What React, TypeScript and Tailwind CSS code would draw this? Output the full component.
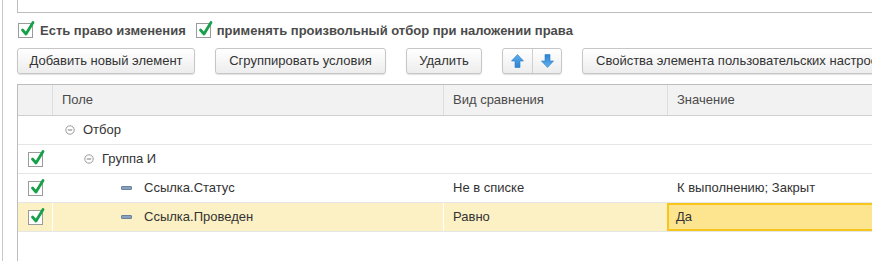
import React from 'react';

const font = { fontFamily: '"Liberation Sans", Arial, sans-serif' };

const Check: React.FC<{ white?: boolean }> = ({ white }) => (
  <div className={`relative w-[15px] h-[15px] border border-[#9b9b9b] ${white ? 'bg-white' : 'bg-white'} shrink-0`}>
    <svg className="absolute -top-[4px] left-[1px]" width="15" height="17" viewBox="0 0 15 17">
      <path d="M2.5 10 L6 14 L13 2.5" fill="none" stroke="#17a04a" strokeWidth="2.8" strokeLinecap="round" strokeLinejoin="round" />
    </svg>
  </div>
);

const Collapse: React.FC = () => (
  <svg width="10" height="10" viewBox="0 0 10 10" className="shrink-0">
    <circle cx="5" cy="5" r="4.2" fill="white" stroke="#9a9a9a" strokeWidth="1" />
    <line x1="2.8" y1="5" x2="7.2" y2="5" stroke="#7a7a7a" strokeWidth="1" />
  </svg>
);

const Item: React.FC = () => (
  <div className="w-[11px] h-[4px] rounded-[1px] bg-[#8aa2bf] border border-[#6a819c] shrink-0" />
);

const Arrow: React.FC<{ down?: boolean }> = ({ down }) => (
  <svg width="13" height="14" viewBox="0 0 13 14" className={down ? 'rotate-180' : ''}>
    <defs>
      <linearGradient id={down ? 'ad' : 'au'} x1="0" y1="0" x2="0" y2="1">
        <stop offset="0" stopColor="#5fb0ee" />
        <stop offset="1" stopColor="#2a82d2" />
      </linearGradient>
    </defs>
    <path d="M6.5 0.5 L12.5 7 L9 7 L9 13.5 L4 13.5 L4 7 L0.5 7 Z" fill={`url(#${down ? 'ad' : 'au'})`} stroke="#2d7cc4" strokeWidth="0.6" />
  </svg>
);

const btn =
  'h-[26px] px-[13px] border border-[#c6c6c6] rounded-[3px] bg-gradient-to-b from-white to-[#ededed] shadow-[0_1px_1px_rgba(0,0,0,0.12)] text-[13px] text-[#333] flex items-center whitespace-nowrap';

type Row = {
  check: boolean;
  indent: number;
  icon: 'collapse' | 'item';
  field: string;
  cmp?: string;
  value?: string;
  selected?: boolean;
};

const rows: Row[] = [
  { check: false, indent: 12, icon: 'collapse', field: 'Отбор' },
  { check: true, indent: 31, icon: 'collapse', field: 'Группа И' },
  { check: true, indent: 68, icon: 'item', field: 'Ссылка.Статус', cmp: 'Не в списке', value: 'К выполнению; Закрыт' },
  { check: true, indent: 68, icon: 'item', field: 'Ссылка.Проведен', cmp: 'Равно', value: 'Да', selected: true },
];

export default function App() {
  return (
    <div className="w-[872px] h-[261px] overflow-hidden bg-white" style={font}>
      <div className="ml-[2px] h-full border-l border-[#c9c9c9] pl-[14px] flex flex-col">
        {/* top field */}
        <div className="w-[900px] h-[13px] border-l border-b border-[#bdbdbd] shrink-0" />

        {/* flags */}
        <div className="mt-[10px] flex items-center h-[15px] text-[13px] font-bold text-[#4b4b4b]">
          <div className="ml-[1px]"><Check /></div>
          <span className="ml-[7px]">Есть право изменения</span>
          <div className="ml-[10px]"><Check /></div>
          <span className="ml-[6px]">применять произвольный отбор при наложении права</span>
        </div>

        {/* toolbar */}
        <div className="mt-[10px] flex items-center w-[900px] shrink-0">
          <div className={`${btn} w-[178px] justify-center`}>Добавить новый элемент</div>
          <div className={`${btn} ml-[20px] w-[171px] justify-center`}>Сгруппировать условия</div>
          <div className={`${btn} ml-[20px] w-[76px] justify-center`}>Удалить</div>
          <div className="ml-[20px] h-[26px] w-[60px] border border-[#c6c6c6] rounded-[3px] bg-gradient-to-b from-white to-[#ededed] shadow-[0_1px_1px_rgba(0,0,0,0.12)] flex">
            <div className="w-[30px] flex items-center justify-center border-r border-[#cfcfcf]"><Arrow /></div>
            <div className="flex-1 flex items-center justify-center"><Arrow down /></div>
          </div>
          <div className={`${btn} ml-[20px] w-[320px]`}>Свойства элемента пользовательских настроек</div>
        </div>

        {/* table */}
        <div className="mt-[10px] w-[900px] flex-1 border-l border-t border-[#bdbdbd] text-[13px] text-[#333]">
          <div className="flex h-[31px] bg-[#f2f2f2] border-b border-[#cfcfcf] text-[#4a4a4a]">
            <div className="w-[34px]" />
            <div className="w-[391px] border-l border-[#dedede] pl-[9px] flex items-center">Поле</div>
            <div className="w-[224px] border-l border-[#dedede] pl-[9px] flex items-center">Вид сравнения</div>
            <div className="flex-1 border-l border-[#dedede] pl-[9px] flex items-center">Значение</div>
          </div>
          {rows.map((r, i) => (
            <div
              key={i}
              className={`flex h-[29px] border-b border-[#e6e6e6] ${r.selected ? 'bg-[#fcf1c4]' : 'bg-white'}`}
            >
              <div className="w-[34px] flex items-center justify-center">
                {r.check && <Check />}
              </div>
              <div className="w-[391px] border-l border-white flex items-center" style={{ paddingLeft: r.indent }}>
                {r.icon === 'collapse' ? <Collapse /> : <Item />}
                <span className={r.icon === 'collapse' ? 'ml-[8px]' : 'ml-[12px]'}>{r.field}</span>
              </div>
              <div className="w-[224px] border-l border-white pl-[9px] flex items-center">{r.cmp}</div>
              {r.selected ? (
                <div className="flex-1 border-2 border-[#f6c61c] bg-[#fde590] pl-[7px] flex items-center">{r.value}</div>
              ) : (
                <div className="flex-1 border-l border-white pl-[9px] flex items-center">{r.value}</div>
              )}
            </div>
          ))}
        </div>
      </div>
    </div>
  );
}
